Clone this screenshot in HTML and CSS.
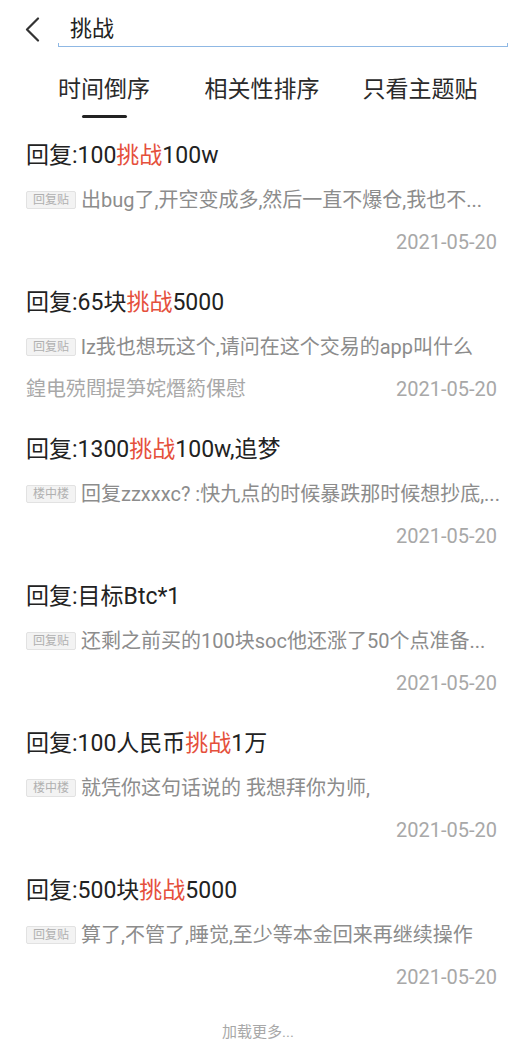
FILE: index.html
```html
<!DOCTYPE html>
<html lang="zh-CN">
<head>
    <meta charset="UTF-8">
    <meta name="viewport" content="width=device-width, initial-scale=1.0">
    <title>搜索 - 挑战</title>
    <link rel="stylesheet" href="styles.css">
</head>
<body>
    <div class="header">
        <button class="back" aria-label="返回">
            <svg width="16" height="26" viewBox="0 0 16 26">
                <path d="M13 1.5 L2 12.5 L13 23.5" fill="none" stroke="#333" stroke-width="2.2" stroke-linecap="round" stroke-linejoin="round"/>
            </svg>
        </button>
        <div class="search">
            <input class="search-input" type="text" value="挑战">
            <div class="search-line"></div>
        </div>
    </div>

    <div class="tabs">
        <div class="tab active">时间倒序<span class="indicator"></span></div>
        <div class="tab">相关性排序</div>
        <div class="tab">只看主题贴</div>
    </div>

    <div class="list">
        <div class="item">
            <div class="title">回复:100<em>挑战</em>100w</div>
            <div class="snippet"><span class="tag">回复贴</span>出bug了,开空变成多,然后一直不爆仓,我也不...</div>
            <div class="meta"><span class="extra"></span><span class="date">2021-05-20</span></div>
        </div>
        <div class="item">
            <div class="title">回复:65块<em>挑战</em>5000</div>
            <div class="snippet"><span class="tag">回复贴</span>lz我也想玩这个,请问在这个交易的app叫什么</div>
            <div class="meta"><span class="extra">鍠电殑閰提笋姹熸箹倮慰</span><span class="date">2021-05-20</span></div>
        </div>
        <div class="item">
            <div class="title">回复:1300<em>挑战</em>100w,追梦</div>
            <div class="snippet"><span class="tag">楼中楼</span>回复zzxxxc? :快九点的时候暴跌那时候想抄底,...</div>
            <div class="meta"><span class="extra"></span><span class="date">2021-05-20</span></div>
        </div>
        <div class="item">
            <div class="title">回复:目标Btc*1</div>
            <div class="snippet"><span class="tag">回复贴</span>还剩之前买的100块soc他还涨了50个点准备...</div>
            <div class="meta"><span class="extra"></span><span class="date">2021-05-20</span></div>
        </div>
        <div class="item">
            <div class="title">回复:100人民币<em>挑战</em>1万</div>
            <div class="snippet"><span class="tag">楼中楼</span>就凭你这句话说的 我想拜你为师,</div>
            <div class="meta"><span class="extra"></span><span class="date">2021-05-20</span></div>
        </div>
        <div class="item">
            <div class="title">回复:500块<em>挑战</em>5000</div>
            <div class="snippet"><span class="tag">回复贴</span>算了,不管了,睡觉,至少等本金回来再继续操作</div>
            <div class="meta"><span class="extra"></span><span class="date">2021-05-20</span></div>
        </div>
    </div>

    <div class="load-more">加载更多...</div>
</body>
</html>
```

FILE: styles.css
```css
body {
    margin: 0;
    background-color: #fff;
    font-family: Roboto, "Noto Sans CJK SC", sans-serif;
    color: #222;
}
.header {
    height: 56px;
    display: flex;
    align-items: flex-start;
}
.back {
    width: 58px;
    height: 56px;
    padding: 3px 0 0 25px;
    border: none;
    background: none;
    display: flex;
    align-items: center;
    justify-content: flex-start;
}
.search {
    flex: 1;
    margin-right: 8px;
    padding-top: 11px;
}
.search-input {
    display: block;
    width: 100%;
    box-sizing: border-box;
    border: none;
    outline: none;
    background: none;
    padding: 0 0 3px 12px;
    height: 32px;
    font-family: inherit;
    font-size: 22px;
    line-height: 29px;
    color: #222;
}
.search-line {
    height: 3px;
    border: 1.5px solid #8fb8e4;
    border-top: none;
}
.tabs {
    display: grid;
    grid-template-columns: repeat(3, 1fr);
    padding: 19px 17px 7px 25px;
}
.tab {
    display: flex;
    flex-direction: column;
    align-items: center;
    font-size: 23px;
    line-height: 30px;
    color: #2a2a2a;
    height: 43px;
}
.indicator {
    margin-top: 10px;
    width: 45px;
    height: 3px;
    border-radius: 2px;
    background-color: #222;
}
.item {
    padding: 16px 12px 16px 26px;
}
.title {
    font-size: 23px;
    line-height: 30px;
    color: #222;
}
.title em {
    font-style: normal;
    color: #e5503c;
}
.snippet {
    margin-top: 15px;
    font-size: 20px;
    line-height: 28px;
    color: #8c8c8c;
    white-space: nowrap;
    display: flex;
    align-items: center;
}
.tag {
    flex: none;
    font-size: 12px;
    line-height: 16px;
    padding: 0 6px;
    margin-right: 5px;
    color: #b0b0b0;
    background-color: #f3f3f3;
    border: 1px solid #e2e2e2;
    border-radius: 2px;
}
.meta {
    margin-top: 14px;
    display: flex;
    justify-content: space-between;
    font-size: 20px;
    line-height: 28px;
    color: #a8a8a8;
}
.date {
    margin-right: 7px;
}
.load-more {
    margin-top: 15px;
    text-align: center;
    font-size: 15px;
    line-height: 20px;
    color: #a8a8a8;
}
```
